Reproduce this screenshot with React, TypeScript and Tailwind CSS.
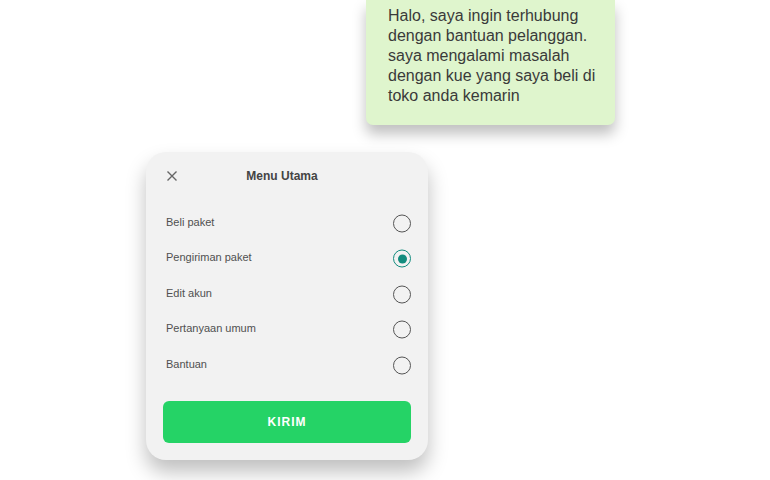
import React from "react";

const items = [
  { label: "Beli paket", selected: false },
  { label: "Pengiriman paket", selected: true },
  { label: "Edit akun", selected: false },
  { label: "Pertanyaan umum", selected: false },
  { label: "Bantuan", selected: false },
];

function Radio({ selected }: { selected: boolean }) {
  if (selected) {
    return (
      <div className="w-[18px] h-[18px] translate-y-[1.5px] rounded-full border-[1.5px] border-[#128c7e] flex items-center justify-center">
        <div className="w-[9px] h-[9px] rounded-full bg-[#128c7e]" />
      </div>
    );
  }
  return <div className="w-[18px] h-[18px] translate-y-[1.5px] rounded-full border-[1.5px] border-[#555555]" />;
}

export default function App() {
  return (
    <div
      className="w-[770px] h-[480px] bg-white overflow-hidden flex flex-col"
      style={{ fontFamily: '"Liberation Sans", Arial, sans-serif' }}
    >
      <div className="ml-[366px] w-[249px] bg-[#dff5cd] rounded-b-[7px] pl-[22px] pr-[12px] pt-[6px] pb-[19px] shadow-[0_9px_14px_rgba(0,0,0,0.25)]">
        <p className="text-[16px] leading-[20px] text-[#3a3a3a]">
          Halo, saya ingin terhubung dengan bantuan pelanggan. saya mengalami masalah dengan kue yang saya beli di toko anda kemarin
        </p>
      </div>

      <div className="ml-[146px] mt-[27px] w-[282px] h-[308px] bg-[#f2f2f2] rounded-[20px] shadow-[0_12px_20px_rgba(0,0,0,0.25)] flex flex-col px-[17px]">
        <div className="h-[48px] flex items-center relative">
          <svg
            className="absolute left-[3px] top-[18px]"
            width="12"
            height="12"
            viewBox="0 0 12 12"
            fill="none"
            stroke="#666666"
            strokeWidth="1.4"
          >
            <path d="M1.5 1.5 L10.5 10.5 M10.5 1.5 L1.5 10.5" />
          </svg>
          <div className="flex-1 text-center pr-[10px] text-[12px] font-bold text-[#444444]">Menu Utama</div>
        </div>
        <div className="mt-[4px] flex flex-col">
          {items.map((it) => (
            <div key={it.label} className="h-[35.5px] flex items-center justify-between pl-[3px] pr-[0px]">
              <span className="text-[11px] text-[#505050]">{it.label}</span>
              <Radio selected={it.selected} />
            </div>
          ))}
        </div>
        <button className="mt-[19px] h-[42px] w-full rounded-[6px] bg-[#25d366] text-white text-[12px] font-bold tracking-[1px]">
          KIRIM
        </button>
      </div>
    </div>
  );
}
